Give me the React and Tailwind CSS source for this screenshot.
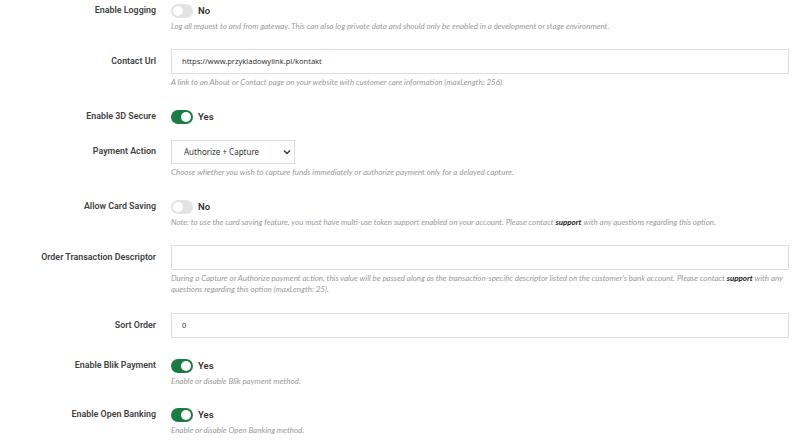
import React from "react";

function Toggle({ on }) {
  return (
    <div className="flex items-center h-[14px]">
      <div
        className={
          "relative w-[22px] h-[14px] rounded-full " +
          (on ? "bg-[#1d7a45]" : "bg-[#e3e3e3]")
        }
      >
        <div
          className={
            "absolute top-[2px] w-[10px] h-[10px] rounded-full bg-white " +
            (on ? "left-[10px]" : "left-[2px]")
          }
        />
      </div>
      <span className="ml-[5px] text-[9.5px] font-semibold text-[#333] font-['Roboto',sans-serif]">
        {on ? "Yes" : "No"}
      </span>
    </div>
  );
}

function Note({ children }) {
  return (
    <div className="mt-[3px] text-[7.95px] leading-[11px] italic text-[#9a9a9a] font-['Lato',sans-serif]">
      {children}
    </div>
  );
}

function Support() {
  return <span className="font-bold text-[#222]">support</span>;
}

function Row({ label, h, mt, children, control }) {
  return (
    <div className={"flex " + mt}>
      <div
        className={
          "w-[156px] shrink-0 flex items-center justify-end text-[8.9px] font-semibold text-[#3f3f3f] font-['Roboto',sans-serif] " +
          h
        }
      >
        {label}
      </div>
      <div className="ml-[15px] flex-1 mr-[11px]">
        {control}
        {children}
      </div>
    </div>
  );
}

function Input({ value }) {
  return (
    <div className="h-[25px] border border-[#dedede] bg-white flex items-center pl-[10px] text-[7.5px] text-[#333] font-['Noto_Sans',sans-serif]">
      {value}
    </div>
  );
}

export default function App() {
  return (
    <div className="w-[800px] h-[444px] bg-white pt-[4px] overflow-hidden">
      <Row label="Enable Logging" h="h-[14px]" mt="mt-0" control={<Toggle on={false} />}>
        <Note>
          Log all request to and from gateway. This can also log private data and should only be enabled in a development or stage environment.
        </Note>
      </Row>
      <Row label="Contact Url" h="h-[25px]" mt="mt-[17px]" control={<Input value="https://www.przykladowylink.pl/kontakt" />}>
        <Note>
          A link to an About or Contact page on your website with customer care information (maxLength: 256).
        </Note>
      </Row>
      <Row label="Enable 3D Secure" h="h-[14px]" mt="mt-[22px]" control={<Toggle on={true} />} />
      <Row
        label="Payment Action"
        h="h-[24px]"
        mt="mt-[16px]"
        control={
          <div className="w-[124px] h-[24px] border border-[#dedede] bg-white flex items-center justify-between pl-[12px] pr-[3px] text-[8px] text-[#333] font-['Noto_Sans',sans-serif]">
            <span>Authorize + Capture</span>
            <svg width="8" height="6" viewBox="0 0 8 6">
              <path d="M1 1.5 L4 4.5 L7 1.5" fill="none" stroke="#333" strokeWidth="1.4" />
            </svg>
          </div>
        }
      >
        <Note>
          Choose whether you wish to capture funds immediately or authorize payment only for a delayed capture.
        </Note>
      </Row>
      <Row label="Allow Card Saving" h="h-[14px]" mt="mt-[22px]" control={<Toggle on={false} />}>
        <Note>
          Note: to use the card saving feature, you must have multi-use token support enabled on your account. Please contact <Support /> with any questions regarding this option.
        </Note>
      </Row>
      <Row label="Order Transaction Descriptor" h="h-[25px]" mt="mt-[17px]" control={<Input value="" />}>
        <Note>
          During a Capture or Authorize payment action, this value will be passed along as the transaction-specific descriptor listed on the customer's bank account. Please contact <Support /> with any questions regarding this option (maxLength: 25).
        </Note>
      </Row>
      <Row label="Sort Order" h="h-[25px]" mt="mt-[18px]" control={<Input value="0" />} />
      <Row label="Enable Blik Payment" h="h-[14px]" mt="mt-[21px]" control={<Toggle on={true} />}>
        <Note>Enable or disable Blik payment method.</Note>
      </Row>
      <Row label="Enable Open Banking" h="h-[14px]" mt="mt-[21px]" control={<Toggle on={true} />}>
        <Note>Enable or disable Open Banking method.</Note>
      </Row>
    </div>
  );
}
